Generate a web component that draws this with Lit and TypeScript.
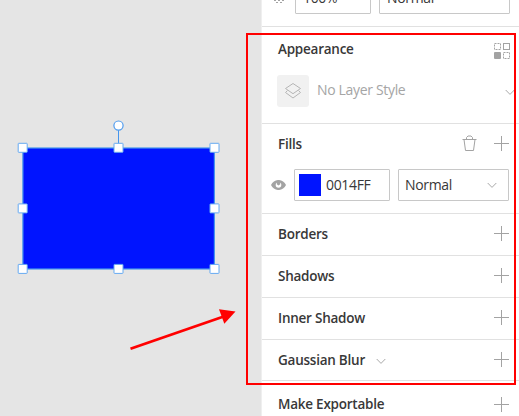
import { LitElement, html, svg, css } from "lit";
import { customElement, property } from "lit/decorators.js";

@customElement("icon-plus")
class IconPlus extends LitElement {
  static styles = css`:host{display:block;width:15px;height:15px;flex:none}svg{display:block}`;
  render() {
    return html`<svg width="15" height="15"><path d="M0 7.5H15M7.5 0V15" stroke="#a3a3a3" fill="none"/></svg>`;
  }
}

@customElement("icon-chevron")
class IconChevron extends LitElement {
  static styles = css`:host{display:block;width:10px;height:7px;flex:none}svg{display:block}`;
  render() {
    return html`<svg width="10" height="7"><path d="M.7 1L5 5.4L9.3 1" stroke="#a8a8a8" fill="none"/></svg>`;
  }
}

@customElement("panel-row")
class PanelRow extends LitElement {
  @property() label = "";
  @property({ type: Boolean }) menu = false;
  static styles = css`
    :host{display:flex;box-sizing:border-box;height:42px;padding:0 10px 2px 16px;align-items:center;border-bottom:1px solid #e1e1e1}
    .label{font-weight:600;font-size:13.5px;flex:none;color:#383838;letter-spacing:-.24px}
    .chev{margin:4px 0 0 11px}
    .gap{flex:1}
  `;
  render() {
    return html`<span class="label">${this.label}</span>
      ${this.menu ? html`<icon-chevron class="chev"></icon-chevron>` : null}
      <span class="gap"></span><icon-plus></icon-plus>`;
  }
}

const xs = [22.6, 118.4, 214.4];
const ys = [147.7, 208.3, 268.8];

@customElement("app-root")
class AppRoot extends LitElement {
  static styles = css`
    :host{display:flex;position:relative;width:519px;height:416px;overflow:hidden;background:#e5e5e5;color:#383838;
      font:14px/18px "Open Sans","Noto Sans",sans-serif;letter-spacing:-.33px}
    *{box-sizing:border-box}
    svg{display:block;flex:none}
    .canvas{width:261px;height:416px;flex:none}
    .panel{width:258px;height:416px;flex:none;background:#fff;border-left:1px solid #efefef;overflow:hidden}
    .top{height:27px;border-bottom:1px solid #e1e1e1;display:flex;align-items:flex-start;padding-left:12px}
    .field{border:1px solid #c8c8c8;border-radius:1px;height:32px;display:flex;align-items:center;background:#fff;flex:none}
    .top .field{margin-top:-18px;padding:0 0 1px 7px}
    .opacity{width:76px;margin-left:9px}
    .blend{width:131px;margin-left:8px}
    .appearance{height:97px;border-bottom:1px solid #e1e1e1}
    .head{display:flex;align-items:center;justify-content:space-between;padding:0 9px 0 16px}
    .appearance .head{height:46px}
    .title{font-weight:600;font-size:13.5px;letter-spacing:-.24px;margin-top:-2px}
    .style{display:flex;align-items:center;padding-left:15px;margin-top:2px;width:260px}
    .thumb{width:32px;height:32px;border-radius:3px;background:#f1f1f1;display:grid;place-items:center;flex:none}
    .none{color:#a5a5a5;margin:-2px 0 0 8px;flex:1;white-space:nowrap}
    .style icon-chevron{margin:2px 7px 0 0}
    .fills{height:90px;border-bottom:1px solid #e1e1e1}
    .fills .head{height:41px;padding-right:10px}
    .tools{display:flex;gap:17px;align-items:center;margin-top:-2px}
    .fill{display:flex;align-items:center;padding-left:9px;margin-top:4px}
    .hex{width:96px;margin-left:8px;padding-left:4px}
    .swatch{width:22px;height:22px;background:#0014ff;margin-right:5px;flex:none}
    .mode{width:111px;margin-left:8px;padding:0 11px 0 6px;justify-content:space-between}
    .blur{height:41px;padding-bottom:1px}
    .export{height:46px;padding-bottom:0;border:0}
    .frame{position:absolute;left:246px;top:33px;width:270px;height:352px;border:2px solid #f00}
  `;
  render() {
    return html`
      <svg class="canvas" width="261" height="416">
        <rect x="22.9" y="148" width="191.5" height="121" fill="#0014ff" stroke="#4595ed" stroke-width="1.2"/>
        <path d="M118.5 130V144" stroke="#4595ed"/>
        <circle cx="118.5" cy="125.6" r="4.6" fill="#fff" stroke="#4d9bef" stroke-width="1.2"/>
        ${ys.map((y, j) => xs.map((x, i) => i === 1 && j === 1 ? null
          : svg`<rect x=${x - 4.4} y=${y - 4.4} width="9" height="9" rx=".5" fill="#fff" stroke="#65a9f1"/>`))}
        <path d="M130.5 348.7L223 316.7" stroke="#f00" stroke-width="2.8"/>
        <path d="M219 309.3L235.5 311.6L224.3 323.7Z" fill="#f00"/>
      </svg>
      <div class="panel">
        <div class="top">
          <svg width="12" height="4"><path d="M0 .5h2m2 0h2m2 0h2M2 2.5h2m2 0h2" stroke="#a3a3a3"/></svg>
          <div class="field opacity">100%</div>
          <div class="field blend">Normal</div>
        </div>
        <div class="appearance">
          <div class="head"><span class="title">Appearance</span>
            <svg width="16" height="17" fill="none" stroke="#a3a3a3">
              <path d="M.5 1.5h6v6h-6zM9.5 10.5h6v6h-6z" stroke-dasharray="2 1"/>
              <rect x="9.5" y="1.5" width="6" height="6"/>
              <rect x="0" y="10" width="7" height="7" rx="1" fill="#a3a3a3" stroke="none"/>
            </svg>
          </div>
          <div class="style">
            <div class="thumb"><svg width="18" height="18" fill="none" stroke="#b5b5b5"><path d="M9 1.5L16.5 6.5L9 11.7L1.5 6.5ZM3.5 8.5L1.5 10.5L9 16L16.5 10.5L14.5 8.5"/></svg></div>
            <span class="none">No Layer Style</span><icon-chevron></icon-chevron>
          </div>
        </div>
        <div class="fills">
          <div class="head"><span class="title">Fills</span><div class="tools">
            <svg width="15" height="17" fill="none" stroke="#a3a3a3"><path d="M.5 4.5H14.5M2 4.5L3.5 15.5H11.5L13 4.5M4.5 4.5V2.5L6 1H9L10.5 2.5V4.5"/></svg>
            <icon-plus></icon-plus></div>
          </div>
          <div class="fill">
            <svg width="15" height="10"><path d="M0 5C3-1.7 12-1.7 15 5C12 11.7 3 11.7 0 5Z" fill="#a3a3a3"/><circle cx="7.5" cy="5" r="2.8" fill="#fff"/><path d="M5.8 2h3.4v2.2l-1.7 1.2l-1.7-1.2z" fill="#a3a3a3"/></svg>
            <div class="field hex"><span class="swatch"></span>0014FF</div>
            <div class="field mode">Normal<icon-chevron></icon-chevron></div>
          </div>
        </div>
        <panel-row label="Borders"></panel-row>
        <panel-row label="Shadows"></panel-row>
        <panel-row label="Inner Shadow"></panel-row>
        <panel-row class="blur" label="Gaussian Blur" menu></panel-row>
        <panel-row class="export" label="Make Exportable"></panel-row>
      </div>
      <div class="frame"></div>`;
  }
}
